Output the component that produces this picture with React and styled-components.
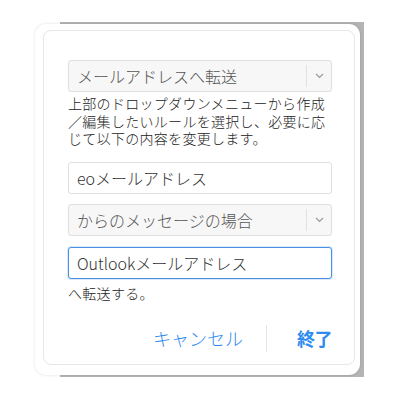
import React from 'react';
import styled, { createGlobalStyle } from 'styled-components';

const GlobalStyle = createGlobalStyle`
    body {
        margin: 0;
        background: #fff;
        font-family: "Noto Sans CJK JP", "Noto Sans", sans-serif;
    }
`;

const Page = styled.div`
    width: 400px;
    height: 400px;
    padding: 24px 0 0 35px;
    box-sizing: border-box;
`;

const Card = styled.div`
    position: relative;
    width: 325px;
    height: 351px;
    box-sizing: border-box;
    padding: 6px 5px 10px 8px;
    background: #fff;
    border-radius: 11px;
    box-shadow: 0 0 3px rgba(0, 0, 0, 0.14);

    &::before {
        content: '';
        position: absolute;
        top: -2px;
        left: 25px;
        right: -4px;
        bottom: -2px;
        background: #b4b4b4;
        z-index: -1;
    }
`;

const Panel = styled.div`
    height: 100%;
    box-sizing: border-box;
    border: 1px solid #e6e6e6;
    border-radius: 8px;
    padding: 29px 22px 0 24px;
    display: flex;
    flex-direction: column;
`;

const Field = styled.div`
    height: 32px;
    box-sizing: border-box;
    display: flex;
    align-items: center;
    border: 1px solid ${(p) => (p.focused ? '#4a90e2' : '#e0e0e0')};
    border-radius: 3px;
    background: ${(p) => (p.select ? '#f7f7f7' : '#fff')};
    box-shadow: ${(p) => (p.focused ? '0 0 0 1px rgba(74,144,226,0.2)' : 'none')};
    margin-top: ${(p) => p.gap || 0}px;
    padding-left: 8px;
    font-size: 16px;
    font-weight: 300;
    color: ${(p) => (p.select ? '#555' : '#333')};
    white-space: nowrap;
`;

const FieldText = styled.span`
    flex: 1;
`;

const Arrow = styled.div`
    width: 24px;
    height: 22px;
    border-left: 1px solid #e2e2e2;
    display: flex;
    align-items: center;
    justify-content: center;
`;

const Note = styled.p`
    margin: ${(p) => p.top || 0}px 0 0;
    font-size: 14px;
    font-weight: 300;
    line-height: 17.5px;
    letter-spacing: 0.3px;
    color: #222;
`;

const Actions = styled.div`
    margin-top: 22px;
    display: flex;
    justify-content: flex-end;
    align-items: center;
    height: 28px;
`;

const ActionButton = styled.button`
    border: none;
    background: none;
    padding: 0;
    font-family: inherit;
    font-size: 18px;
    font-weight: ${(p) => (p.primary ? 700 : 300)};
    color: #2e8cf0;
    letter-spacing: ${(p) => (p.primary ? '-0.5px' : '0')};
`;

const Divider = styled.div`
    width: 1px;
    height: 27px;
    background: #e4e4e4;
    margin: 0 30px 0 23px;
`;

const Chevron = () => (
    <svg width="9" height="6" viewBox="0 0 9 6">
        <path d="M1 1l3.5 3.5L8 1" fill="none" stroke="#999" strokeWidth="1.2" />
    </svg>
);

const App = () => {
    return (
        <>
            <GlobalStyle />
            <Page>
                <Card>
                    <Panel>
                        <Field select>
                            <FieldText>メールアドレスへ転送</FieldText>
                            <Arrow><Chevron /></Arrow>
                        </Field>
                        <Note top={3}>
                            上部のドロップダウンメニューから作成／編集したいルールを選択し、必要に応じて以下の内容を変更します。
                        </Note>
                        <Field gap={14}>
                            <FieldText>eoメールアドレス</FieldText>
                        </Field>
                        <Field select gap={10}>
                            <FieldText>からのメッセージの場合</FieldText>
                            <Arrow><Chevron /></Arrow>
                        </Field>
                        <Field focused gap={11}>
                            <FieldText>Outlookメールアドレス</FieldText>
                        </Field>
                        <Note top={6}>へ転送する。</Note>
                        <Actions>
                            <ActionButton>キャンセル</ActionButton>
                            <Divider />
                            <ActionButton primary>終了</ActionButton>
                        </Actions>
                    </Panel>
                </Card>
            </Page>
        </>
    );
};

export default App;
